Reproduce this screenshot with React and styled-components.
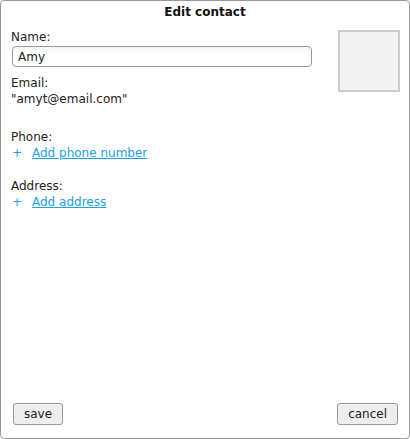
import React from 'react';
import styled, { createGlobalStyle } from 'styled-components';

const GlobalStyle = createGlobalStyle`
  html, body {
    margin: 0;
    padding: 0;
    background: #fff;
  }
  body {
    font-family: "DejaVu Sans", Verdana, sans-serif;
    font-size: 12px;
    color: #222;
  }
`;

const Dialog = styled.div`
  box-sizing: border-box;
  width: 410px;
  height: 439px;
  border: 1px solid #999;
  border-radius: 4px;
  display: flex;
  flex-direction: column;
  background: #fff;
`;

const Title = styled.div`
  text-align: center;
  font-weight: bold;
  font-size: 12px;
  line-height: 16px;
  padding-top: 3px;
  color: #111;
`;

const Body = styled.div`
  flex: 1;
  display: flex;
  padding: 9px 10px 0 10px;
  gap: 26px;
`;

const Fields = styled.div`
  flex: 1;
  display: flex;
  flex-direction: column;
`;

const Field = styled.div`
  display: flex;
  flex-direction: column;
  margin-bottom: ${p => p.gap || 0}px;
`;

const Label = styled.div`
  line-height: 16px;
`;

const Value = styled.div`
  line-height: 16px;
`;

const TextInput = styled.input`
  box-sizing: border-box;
  width: 300px;
  height: 21px;
  margin: 1px 0 0 1px;
  padding: 0 5px;
  border: 1px solid #999;
  border-radius: 4px;
  font-family: inherit;
  font-size: 12px;
  color: #222;
  background: linear-gradient(#f6f6f6, #fff 40%);
  outline: none;
`;

const AddRow = styled.div`
  display: flex;
  align-items: center;
  line-height: 16px;
  color: #1ba1e2;
`;

const Plus = styled.span`
  width: 20px;
  padding-left: 1px;
`;

const AddLink = styled.a`
  color: #1ba1e2;
  text-decoration: underline;
  cursor: pointer;
`;

const Photo = styled.div`
  box-sizing: border-box;
  width: 62px;
  height: 62px;
  margin-top: 1px;
  margin-right: 1px;
  border: 2px solid #ccc;
  background: #f2f2f2;
  flex-shrink: 0;
`;

const Footer = styled.div`
  display: flex;
  justify-content: space-between;
  padding: 0 11px 13px 12px;
`;

const Button = styled.button`
  box-sizing: border-box;
  height: 22px;
  min-width: ${p => p.w}px;
  padding: 0 10px;
  border: 1px solid #999;
  border-radius: 3px;
  background: #eee;
  font-family: inherit;
  font-size: 12px;
  color: #222;
  cursor: pointer;
`;

export default function App() {
  return (
    <>
      <GlobalStyle />
      <Dialog>
        <Title>Edit contact</Title>
        <Body>
          <Fields>
            <Field gap={8}>
              <Label>Name:</Label>
              <TextInput defaultValue="Amy" />
            </Field>
            <Field gap={22}>
              <Label>Email:</Label>
              <Value>"amyt@email.com"</Value>
            </Field>
            <Field gap={17}>
              <Label>Phone:</Label>
              <AddRow>
                <Plus>+</Plus>
                <AddLink>Add phone number</AddLink>
              </AddRow>
            </Field>
            <Field>
              <Label>Address:</Label>
              <AddRow>
                <Plus>+</Plus>
                <AddLink>Add address</AddLink>
              </AddRow>
            </Field>
          </Fields>
          <Photo />
        </Body>
        <Footer>
          <Button w={50}>save</Button>
          <Button w={60}>cancel</Button>
        </Footer>
      </Dialog>
    </>
  );
}
